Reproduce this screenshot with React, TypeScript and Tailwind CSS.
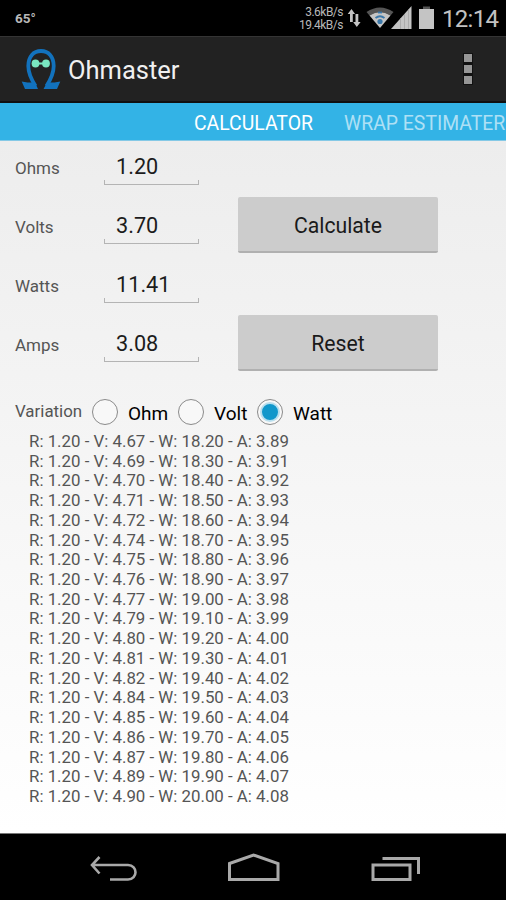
import React from "react";

const fields = [
  { label: "Ohms", value: "1.20" },
  { label: "Volts", value: "3.70", action: "Calculate" },
  { label: "Watts", value: "11.41" },
  { label: "Amps", value: "3.08", action: "Reset" },
];

const volts = [
  "4.67", "4.69", "4.70", "4.71", "4.72", "4.74", "4.75", "4.76", "4.77", "4.79",
  "4.80", "4.81", "4.82", "4.84", "4.85", "4.86", "4.87", "4.89", "4.90",
];
const amps = [
  "3.89", "3.91", "3.92", "3.93", "3.94", "3.95", "3.96", "3.97", "3.98", "3.99",
  "4.00", "4.01", "4.02", "4.03", "4.04", "4.05", "4.06", "4.07", "4.08",
];
const rows = volts.map(
  (v, i) => `R: 1.20 - V: ${v} - W: ${(18.2 + i * 0.1).toFixed(2)} - A: ${amps[i]}`
);

function StatusBar() {
  return (
    <div className="flex h-9 shrink-0 items-center bg-black pl-[15px] text-[#b8b8b8]">
      <span className="pt-0.5 text-[13.500px] leading-none font-bold">65°</span>
      <div className="ml-auto w-[62px] pt-0.5 text-right text-[12px] leading-[13px] tracking-[-0.5px]">
        <div>3.6kB/s</div>
        <div>19.4kB/s</div>
      </div>
      <svg className="ml-1 h-9 w-[90px] shrink-0" viewBox="347 0 90 36">
        <g fill="#c4c4c4">
          <path d="M351.500 9l3.600 5h-2.300v8h-2.800v-8h-2.300zM356.800 27l-3.600-5h2.300v-8h2.800v8h2.300z" />
          <path d="M366.500 12Q380 3 393.500 12L390.500 15.500Q380 8.500 369.500 15.500z" fill="#555" />
          <path d="M369.500 15.500Q380 8.500 390.500 15.500L380 28z" />
          <path d="M411.500 6v23H391z" />
          <path d="M419 9h15v20h-15z" />
          <path d="M423 6.500h7V9h-7z" fill="#555" />
        </g>
        <g fill="none" stroke="#3b78aa" strokeWidth="1.8">
          <path d="M375.500 18Q380 14.500 384.500 18" />
          <path d="M378 12.500h4" />
        </g>
        <circle cx="380" cy="21.500" r="2.6" fill="#3b78aa" />
        <path d="M400.500 18v11M404.500 14v15M408.500 9.500v19.500" stroke="#a4a4a4" strokeWidth=".8" />
      </svg>
      <span className="ml-[5px] w-[64px] pt-0.5 text-[24px] leading-none tracking-[-0.7px] text-[#c2c2c2]">12:14</span>
    </div>
  );
}

function AppBar() {
  return (
    <header className="flex h-[67px] shrink-0 items-center border-t border-b-2 border-t-[#343434] border-b-[#101010] bg-[#222] pr-[33px] pl-5">
      <svg className="h-[44px] w-[42px]" viewBox="20 48 42 44">
        <path
          d="M35.500 87C31 80 28.300 74.500 28.300 67C28.300 57.500 33.500 52 41 52S53.700 57.500 53.700 67C53.700 74.500 51 80 46.500 87"
          fill="none"
          stroke="#1272bd"
          strokeWidth="3.800"
        />
        <path d="M21.700 82.500L27.500 83.500H35L38 90H25zM60.300 82.500L54.500 83.500H47L43.500 90H57z" fill="#1272bd" />
        <circle cx="35.500" cy="64.500" r="3.900" fill="#79e6c0" />
        <circle cx="46" cy="64.500" r="3.900" fill="#79e6c0" />
        <path d="M35 64.500h11" stroke="#79e6c0" strokeWidth="2" />
      </svg>
      <h1 className="ml-1.5 pt-[3px] text-[25.500px] leading-none text-[#f0f0f0]">Ohmaster</h1>
      <div className="ml-auto flex flex-col gap-[3px] bg-[#111] p-px">
        <i className="size-2 bg-[#969696]" />
        <i className="size-2 bg-[#969696]" />
        <i className="size-2 bg-[#969696]" />
      </div>
    </header>
  );
}

function Radio({ label, checked, className }: { label: string; checked?: boolean; className: string }) {
  return (
    <label className={`flex items-center ${className}`}>
      <span className="flex size-[26px] shrink-0 items-center justify-center rounded-full border border-[#8a8a8a] bg-[#f8f8f8]">
        {checked && <span className="size-[20px] rounded-full border-2 border-[#b9dfee] bg-[#1097cb]" />}
      </span>
      <span className="ml-2.5 pt-[3px] text-[19px] leading-none text-black">{label}</span>
    </label>
  );
}

export default function App() {
  return (
    <div className="flex h-[900px] w-[506px] flex-col overflow-hidden font-['Roboto','Liberation_Sans',sans-serif]">
      <StatusBar />
      <AppBar />
      <nav className="flex h-[38px] shrink-0 items-center border-b border-[#85c9e6] bg-[#33b3e6] pt-1 pl-[194px] text-[19.400px] leading-none whitespace-nowrap">
        <span className="w-[150px] text-white">CALCULATOR</span>
        <span className="text-[#aee0f5]">WRAP ESTIMATER</span>
      </nav>
      <main className="flex h-[692px] shrink-0 flex-col bg-linear-to-b from-[#ededed] to-white">
        {fields.map((f, i) => (
          <div key={f.label} className={`flex shrink-0 items-center pl-[15px] ${i === 0 ? "h-[57px] pb-[2px]" : "h-[59px]"}`}>
            <span className="w-[89px] pb-px text-[17px] leading-none text-[#555]">{f.label}</span>
            <div className="flex w-[95px] flex-col">
              <span className="pt-px pl-3 text-[21.700px] leading-[27px] text-[#1c1c1c]">{f.value}</span>
              <span className="h-[5px] border border-t-0 border-[#b4b4b4]" />
            </div>
            {f.action && (
              <button className="mb-[5px] ml-[39px] h-14 w-[200px] shrink-0 rounded-[2px] border-b-2 border-[#b0b0b0] bg-[#ccc] pt-1 text-[21.200px] leading-none text-[#1a1a1a]">
                {f.action}
              </button>
            )}
          </div>
        ))}
        <div className="mt-[23px] flex h-[27px] shrink-0 items-center pl-[15px]">
          <span className="w-[77px] text-[16.900px] leading-none text-[#555]">Variation</span>
          <Radio label="Ohm" className="w-[86px]" />
          <Radio label="Volt" className="w-[79px]" />
          <Radio label="Watt" checked className="" />
        </div>
        <div className="mt-[7px] pl-[29px] text-[16.850px] leading-[19.720px] whitespace-nowrap text-[#555]">
          {rows.map((r) => (
            <div key={r}>{r}</div>
          ))}
        </div>
      </main>
      <footer className="h-[67px] shrink-0 border-t border-[#777] bg-black">
        <svg className="h-[66px] w-[506px]" viewBox="0 834 506 66" fill="none" stroke="#a9a9a9" strokeWidth="3">
          <path d="M99.500 857L92 865L99.500 873.500M92 865H128C138 865 138 879.500 128 879.500H110" strokeWidth="2.6" />
          <path d="M229.500 863.500L253.500 855L278 863.500V879.500H229.500z" />
          <path d="M373 865H410V879.500H373zM382.500 858.500H418.500V874" />
        </svg>
      </footer>
    </div>
  );
}
